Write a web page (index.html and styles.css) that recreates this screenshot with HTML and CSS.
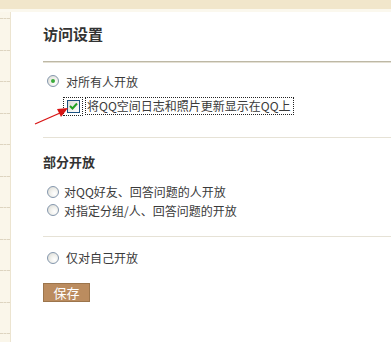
FILE: index.html
```html
<!DOCTYPE html>
<html lang="zh-CN">
<head>
    <meta charset="UTF-8">
    <title>访问设置</title>
    <link rel="stylesheet" href="styles.css">
</head>
<body>
    <div class="topbar"></div>
    <div class="page">
        <div class="side">
            <div class="side-first"></div>
            <div class="side-item"></div>
            <div class="side-item"></div>
            <div class="side-item"></div>
            <div class="side-item"></div>
            <div class="side-item"></div>
            <div class="side-item"></div>
            <div class="side-item"></div>
            <div class="side-item"></div>
            <div class="side-item"></div>
            <div class="side-item"></div>
        </div>
        <div class="content">
            <h2 class="title">访问设置</h2>

            <div class="group group-all">
                <div class="opt opt-wide">
                    <span class="radio checked"></span>
                    <span>对所有人开放</span>
                </div>
                <div class="opt-check">
                    <span class="focus-box">
                        <span class="checkbox">
                            <svg width="9" height="8" viewBox="0 0 9 8"><path d="M1 4 L3.5 6.5 L8 1.5" fill="none" stroke="#21a121" stroke-width="2"/></svg>
                        </span>
                    </span>
                    <span class="check-label">将QQ空间日志和照片更新显示在QQ上</span>
                </div>
            </div>

            <div class="group group-part">
                <div class="sub-title">部分开放</div>
                <div class="opt">
                    <span class="radio"></span>
                    <span>对QQ好友、回答问题的人开放</span>
                </div>
                <div class="opt">
                    <span class="radio"></span>
                    <span>对指定分组/人、回答问题的开放</span>
                </div>
            </div>

            <div class="group group-self">
                <div class="opt opt-wide">
                    <span class="radio"></span>
                    <span>仅对自己开放</span>
                </div>
            </div>

            <button class="save">保存</button>
        </div>
    </div>

    <svg class="arrow" width="391" height="342" viewBox="0 0 391 342">
        <line x1="35" y1="124" x2="60" y2="113" stroke="#d81414" stroke-width="1.3"/>
        <polygon points="68,108 57,109 61,117" fill="#d81414"/>
    </svg>
</body>
</html>
```

FILE: styles.css
```css
body {
    margin: 0;
    width: 391px;
    height: 342px;
    overflow: hidden;
    background: #fff;
    font-family: "Noto Sans CJK SC", sans-serif;
    font-size: 12px;
    color: #3a3a3a;
    position: relative;
}
.topbar {
    height: 9px;
    background: #f1e6cb;
    border-bottom: 3px solid #fbf8ee;
}
.page {
    display: flex;
    height: 330px;
}
.side {
    width: 10px;
    background: #faf6ea;
    border-right: 1px solid #ece4d0;
}
.side-first {
    height: 6px;
    border-bottom: 1px dashed #ddd4c0;
}
.side-item {
    height: 30.5px;
    border-bottom: 1px dashed #ddd4c0;
}
.content {
    flex: 1;
    padding-left: 32px;
}
.title {
    margin: 12px 0 0;
    font-size: 15px;
    line-height: 20px;
    font-weight: bold;
    color: #333;
    padding-bottom: 17px;
    border-bottom: 1px solid #bdb8a5;
    box-shadow: 0 1px 0 #e4e0d4;
}
.group {
    border-bottom: 1px solid #e6e2d6;
}
.group-all {
    padding: 10px 0 21px;
}
.group-part {
    padding: 15px 0 16px;
}
.group-self {
    border-bottom: none;
    padding-top: 12px;
}
.opt {
    display: flex;
    align-items: center;
    height: 18.5px;
    padding-left: 4px;
    gap: 5px;
}
.opt-wide {
    gap: 7px;
}
.radio {
    width: 10px;
    height: 10px;
    border: 1px solid #8497ad;
    border-radius: 50%;
    background: radial-gradient(circle at 65% 65%, #fff 0, #f2f2ee 40%, #d6d6d0 100%);
    position: relative;
}
.radio.checked::after {
    content: "";
    position: absolute;
    left: 3px;
    top: 3px;
    width: 4px;
    height: 4px;
    border-radius: 50%;
    background: #3aaa3a;
}
.opt-check {
    display: flex;
    align-items: center;
    margin-top: 6px;
    padding-left: 20px;
}
.focus-box {
    display: flex;
    align-items: center;
    justify-content: center;
    width: 18px;
    height: 17px;
    border: 1px dotted #222;
}
.checkbox {
    display: flex;
    align-items: center;
    justify-content: center;
    width: 11px;
    height: 11px;
    border: 1px solid #1c5180;
    background: linear-gradient(135deg, #dcdcd6, #fff);
}
.check-label {
    margin-left: 2px;
    border: 1px dotted #222;
    padding: 0 2px 0 1px;
    line-height: 16px;
}
.sub-title {
    font-size: 13px;
    font-weight: bold;
    line-height: 18px;
    color: #333;
    margin-bottom: 12px;
}
.save {
    display: block;
    margin-top: 16px;
    width: 47px;
    height: 19px;
    padding: 0;
    border: 1px solid #9c754c;
    background: #bb8c5f;
    color: #fff;
    font-family: "Noto Sans CJK SC", sans-serif;
    font-size: 13px;
    line-height: 17px;
}
.arrow {
    position: absolute;
    left: 0;
    top: 0;
    pointer-events: none;
}
```
